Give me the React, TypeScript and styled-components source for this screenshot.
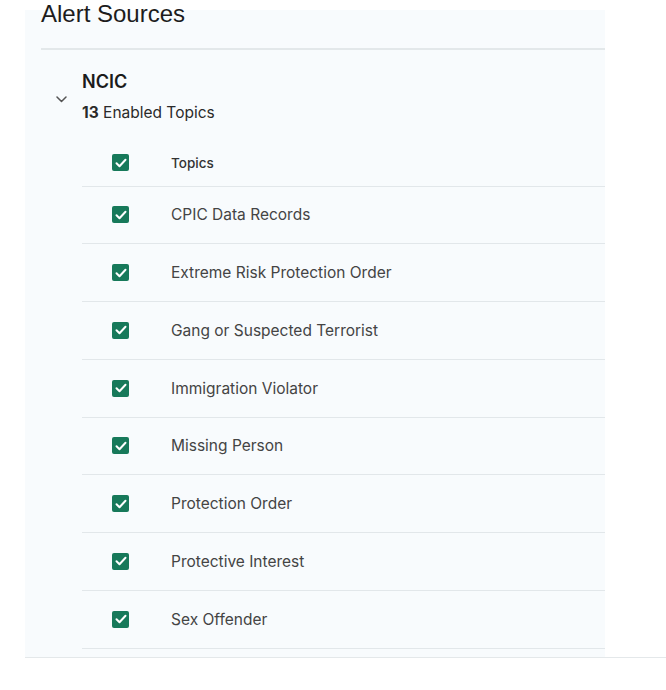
import React from 'react';
import styled, { createGlobalStyle } from 'styled-components';

const GlobalStyle = createGlobalStyle`
  html, body {
    margin: 0;
    padding: 0;
    background: #ffffff;
  }
  body {
    font-family: Inter, "Noto Sans", sans-serif;
    color: #222;
    overflow: hidden;
  }
`;

const Page = styled.div`
  padding: 10px 0 0 25px;
`;

const Frame = styled.div`
  border-bottom: 1.5px solid #e4e8ea;
`;

const Panel = styled.section`
  width: 580px;
  background: #f8fbfd;
  display: flex;
  flex-direction: column;
  padding: 0 0 8px 16px;
  box-sizing: border-box;
`;

const Header = styled.header`
  margin-top: -10px;
  height: 50px;
  border-bottom: 2px solid #e3e8ea;
  box-sizing: border-box;
`;

const Title = styled.h2`
  margin: 0;
  font-family: "Liberation Sans", Arial, sans-serif;
  font-weight: 400;
  font-size: 24px;
  line-height: 28px;
  color: #1c1c1c;
`;

const Source = styled.div`
  display: flex;
  align-items: center;
  padding-top: 20px;
`;

const Toggle = styled.button`
  width: 41px;
  height: 20px;
  display: flex;
  align-items: center;
  justify-content: flex-start;
  padding: 0 0 0 15px;
  margin: 6px 0 0;
  border: none;
  background: transparent;
  cursor: pointer;
  color: #555;
`;

const SourceInfo = styled.div`
  display: flex;
  flex-direction: column;
  gap: 9px;
`;

const SourceName = styled.div`
  font-size: 18px;
  font-weight: 600;
  line-height: 24px;
  color: #1b1b1b;
`;

const SourceCount = styled.div`
  font-size: 15.5px;
  line-height: 20px;
  color: #2a2a2a;

  b {
    font-weight: 700;
  }
`;

const Table = styled.div`
  margin: 17px 0 0 41px;
  display: flex;
  flex-direction: column;
`;

const Row = styled.label<{ $head?: boolean }>`
  display: flex;
  align-items: center;
  height: ${(p) => (p.$head ? '46.5px' : '57.75px')};
  padding-left: 30px;
  border-bottom: 1.5px solid #e2e7ea;
  box-sizing: border-box;
  cursor: pointer;
`;

const Box = styled.span`
  width: 17px;
  height: 17px;
  border-radius: 2px;
  background: #17795a;
  display: flex;
  align-items: center;
  justify-content: center;
  margin-right: 42px;
  flex-shrink: 0;
`;

const Label = styled.span<{ $head?: boolean }>`
  font-size: ${(p) => (p.$head ? '13.5px' : '15.5px')};
  font-weight: ${(p) => (p.$head ? 500 : 400)};
  color: ${(p) => (p.$head ? '#333' : '#444')};
`;

const topics = [
  'CPIC Data Records',
  'Extreme Risk Protection Order',
  'Gang or Suspected Terrorist',
  'Immigration Violator',
  'Missing Person',
  'Protection Order',
  'Protective Interest',
  'Sex Offender',
];

const Check = () => (
  <Box>
    <svg width="12" height="10" viewBox="0 0 12 10" fill="none">
      <path d="M1.5 5.2 4.5 8.2 10.5 1.8" stroke="#fff" strokeWidth="2" strokeLinecap="round" strokeLinejoin="round" />
    </svg>
  </Box>
);

const Chevron = () => (
  <svg width="11" height="7" viewBox="0 0 11 7" fill="none">
    <path d="M1 1 5.5 5.5 10 1" stroke="currentColor" strokeWidth="1.5" strokeLinecap="round" strokeLinejoin="round" />
  </svg>
);

const App = () => (
  <>
    <GlobalStyle />
    <Page>
      <Frame>
        <Panel>
          <Header>
            <Title>Alert Sources</Title>
          </Header>
          <Source>
            <Toggle aria-label="Collapse NCIC">
              <Chevron />
            </Toggle>
            <SourceInfo>
              <SourceName>NCIC</SourceName>
              <SourceCount>
                <b>13</b> Enabled Topics
              </SourceCount>
            </SourceInfo>
          </Source>
          <Table>
            <Row $head>
              <Check />
              <Label $head>Topics</Label>
            </Row>
            {topics.map((t) => (
              <Row key={t}>
                <Check />
                <Label>{t}</Label>
              </Row>
            ))}
          </Table>
        </Panel>
      </Frame>
    </Page>
  </>
);

export default App;
